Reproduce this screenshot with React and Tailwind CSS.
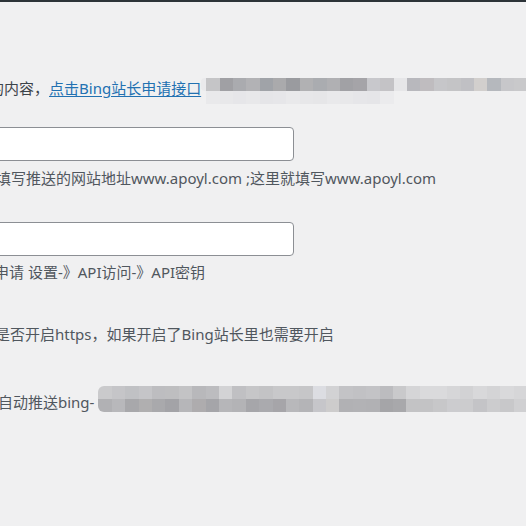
import React from "react";

const font = { fontFamily: '"Noto Sans", "Noto Sans CJK SC", sans-serif' };

// mosaic over the redacted bits
const blurTop = [
  "bg-[#c5c5c7]", "bg-[#a0a0a4]", "bg-[#aaabaf]", "bg-[#b2b2b5]", "bg-[#a0a3a8]", "bg-[#aaaaac]",
  "bg-[#9a9b9f]", "bg-[#b1b1b3]", "bg-[#aaacb0]", "bg-[#b0b0b3]", "bg-[#a1a1a5]", "bg-[#a5a4a8]",
  "bg-[#c8c8cc]", "bg-[#c4c3c6]", "bg-[#e6e6e8]", "bg-[#b8b8bd]", "bg-[#bfbcbf]", "bg-[#c6c6c9]",
  "bg-[#c4c4c6]", "bg-[#c0c0c4]", "bg-[#d2cfcd]", "bg-[#b5b8bd]", "bg-[#c7c7ca]", "bg-[#c9c9cb]",
];
const blurTop2 = [
  "bg-[#e9e9eb]", "bg-[#e8e8ea]", "bg-[#e6e6e9]", "bg-[#e8e8ea]", "bg-[#e5e5e8]", "bg-[#e6e6e9]",
  "bg-[#e9e9eb]", "bg-[#e7e7e9]", "bg-[#e6e6e8]", "bg-[#e9e9eb]", "bg-[#e8e8ea]", "bg-[#e6e6e9]",
  "bg-[#e5e5e8]", "bg-[#ebebed]",
];
const blurBottom = [
  "bg-[#cacacc]", "bg-[#c5c5c8]", "bg-[#c0c1c4]", "bg-[#c5c5c8]", "bg-[#bdbdc0]", "bg-[#bebec0]",
  "bg-[#c3c3c5]", "bg-[#b8b8bb]", "bg-[#bcbcbf]", "bg-[#d3d3d5]", "bg-[#c0c0c3]", "bg-[#c6c6c8]",
  "bg-[#c3c3c5]", "bg-[#c8c8ca]", "bg-[#c8c8ca]", "bg-[#c6c6c8]", "bg-[#dcdde2]", "bg-[#d2d2d4]",
  "bg-[#c3c3c6]", "bg-[#c1c1c4]", "bg-[#c3c3c6]", "bg-[#bcbcbf]", "bg-[#c9c9cb]", "bg-[#d5d5d7]",
  "bg-[#dadadc]", "bg-[#dadadc]", "bg-[#d6d6d8]", "bg-[#d2d2d4]", "bg-[#d8d8da]", "bg-[#d4d4d6]",
  "bg-[#d9d9db]", "bg-[#d6d6d8]", "bg-[#d8d8da]",
];
const blurBottom2 = [
  "bg-[#b1b1b4]", "bg-[#b8b8bb]", "bg-[#a8a8ab]", "bg-[#b0afb0]", "bg-[#a9a9ac]", "bg-[#a3a3a7]",
  "bg-[#b6b6b9]", "bg-[#aeacae]", "bg-[#a5a5a9]", "bg-[#b6b6b9]", "bg-[#b3b3b6]", "bg-[#a6a6aa]",
  "bg-[#aaaaae]", "bg-[#a6a5a9]", "bg-[#b8b8bb]", "bg-[#b4b4b7]", "bg-[#c6c6ca]", "bg-[#cdcccc]",
  "bg-[#b1b1b4]", "bg-[#b2b2b5]", "bg-[#b1b1b4]", "bg-[#a5a5a8]", "bg-[#a8a8ab]", "bg-[#c3c3c5]",
  "bg-[#c3c3c5]", "bg-[#c7c7c9]", "bg-[#cccccf]", "bg-[#ccccce]", "bg-[#c4c4c7]", "bg-[#ccccce]",
  "bg-[#c8c8ca]", "bg-[#d0d0d2]", "bg-[#cdcdcf]",
];

const Cells = ({ colors }) => (
  <div className="flex">
    {colors.map((c, i) => (
      <div key={i} className={`w-[13.4px] h-[13px] shrink-0 ${c}`} />
    ))}
  </div>
);

const Mosaic = ({ top, bottom, className = "" }) => (
  <div className={`flex flex-col rounded-l-[6px] overflow-hidden shrink-0 ${className}`}>
    <Cells colors={top} />
    <Cells colors={bottom} />
  </div>
);

const TextInput = () => (
  <input
    type="text"
    className="-ml-[60px] w-[354px] h-[34px] bg-white border border-[#8c8f94] rounded-[4px] px-2 outline-none"
  />
);

export default function App() {
  return (
    <div className="w-[526px] h-[526px] overflow-hidden bg-[#f0f0f1] text-[15px] leading-[22px] text-[#50575e]" style={font}>
      <div className="h-[2px] bg-[#2c3338]" />

      <div className="flex flex-col">
        <div className="mt-[75px] flex items-start whitespace-nowrap">
          <span className="-ml-[11px] text-[#3c434a]">
            的内容，<a href="#" className="text-[#2271b1] underline underline-offset-2">点击Bing站长申请接口</a>
          </span>
          <div className="mt-[1px] flex flex-col">
            <div className="flex">
              <div className="w-[5px] h-[13px] bg-[#eaeaec] rounded-l-[4px]" />
              <Cells colors={blurTop} />
            </div>
            <div className="flex pl-[5px]">
              <Cells colors={blurTop2} />
            </div>
          </div>
        </div>

        <div className="mt-[23px] flex">
          <TextInput />
        </div>
        <p className="mt-[6px] -ml-[4px] whitespace-nowrap">
          填写推送的网站地址www.apoyl.com ;这里就填写www.apoyl.com
        </p>

        <div className="mt-[33px] flex">
          <TextInput />
        </div>
        <p className="mt-[5px] -ml-[6px] whitespace-nowrap">申请 设置-》API访问-》API密钥</p>

        <p className="mt-[40px] -ml-[5px] whitespace-nowrap">是否开启https，如果开启了Bing站长里也需要开启</p>

        <div className="mt-[41px] flex items-start whitespace-nowrap">
          <span className="mt-[5px] -ml-[2px]">自动推送bing-</span>
          <Mosaic top={blurBottom} bottom={blurBottom2} className="ml-[4px]" />
        </div>
      </div>
    </div>
  );
}
